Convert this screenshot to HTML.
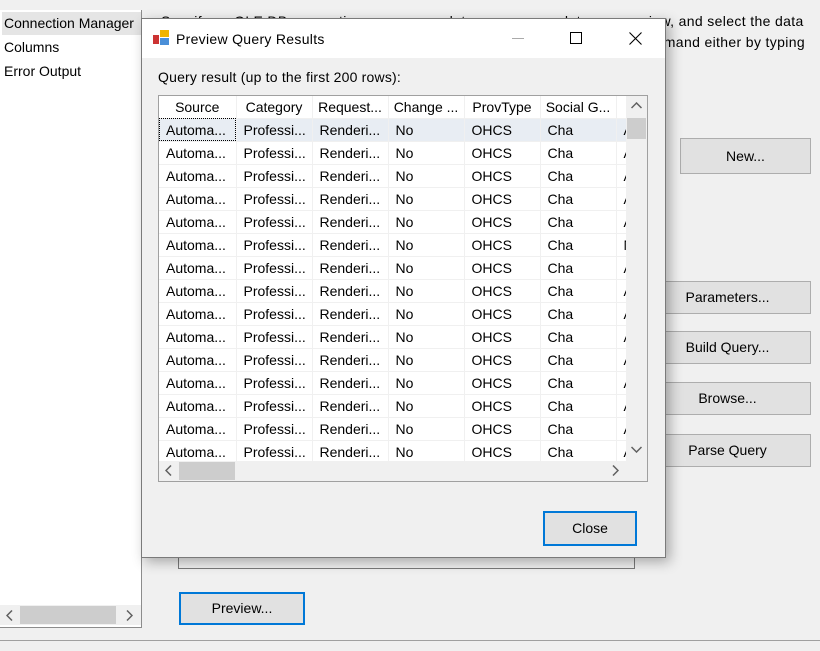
<!DOCTYPE html>
<html><head><style>
*{box-sizing:border-box;margin:0;padding:0}
body{width:820px;height:651px;background:#f0f0f0;font-family:"Liberation Sans",sans-serif;font-size:14px;color:#000;position:relative;overflow:hidden}
.a{position:absolute}
.btn{position:absolute;background:#e1e1e1;border:1px solid #adadad;text-align:center;font-size:14px}
.bb{border:2px solid #0078d7}
table{border-collapse:collapse;table-layout:fixed}
td,th{height:23px;border-right:1px solid #f0f0f0;border-bottom:1px solid #f0f0f0;font-weight:normal;white-space:nowrap;overflow:hidden;padding:0 0 0 7px;text-align:left;font-size:14px}
th{text-align:center;padding:0;height:22px}
</style></head><body>
<div class="a" style="left:0;top:10px;width:142px;height:618px;background:#fff;border-right:1px solid #8c8c8c;border-bottom:1px solid #8c8c8c"></div>
<div class="a" style="left:2px;top:12px;width:139px;height:23px;background:#e5e5e5"></div>
<div class="a" style="left:4px;top:15px">Connection Manager</div>
<div class="a" style="left:4px;top:39px">Columns</div>
<div class="a" style="left:4px;top:63px">Error Output</div>
<div class="a" style="left:0;top:605px;width:141px;height:20px;background:#f0f0f0"></div>
<div class="a" style="left:20px;top:606px;width:96px;height:18px;background:#cdcdcd"></div>
<svg class="a" style="left:6px;top:610px" width="7" height="11"><path d="M6 0.5L1 5.5L6 10.5" stroke="#606060" fill="none" stroke-width="1.5"/></svg>
<svg class="a" style="left:126px;top:610px" width="7" height="11"><path d="M1 0.5L6 5.5L1 10.5" stroke="#606060" fill="none" stroke-width="1.5"/></svg>
<div class="a" style="left:0;top:640px;width:820px;height:1px;background:#a0a0a0"></div>
<div class="a" style="left:161px;top:11px;width:660px;line-height:21px;letter-spacing:0.35px;white-space:nowrap">Specify an OLE DB connection manager, a data source, or a data source view, and select the data<br>access mode. If using the SQL command access mode, specify the SQL command either by typing</div>
<div class="btn" style="left:680px;top:138px;width:131px;height:36px;line-height:34px">New...</div>
<div class="a" style="left:640px;top:208px;width:26px;height:30px;border:1px solid #7a7a7a;background:#f0f0f0"></div>
<div class="btn" style="left:640px;top:281px;width:171px;height:33px;line-height:31px;padding-left:4px">Parameters...</div>
<div class="btn" style="left:640px;top:331px;width:171px;height:33px;line-height:31px;padding-left:4px">Build Query...</div>
<div class="btn" style="left:640px;top:382px;width:171px;height:33px;line-height:31px;padding-left:4px">Browse...</div>
<div class="btn" style="left:640px;top:434px;width:171px;height:33px;line-height:31px;padding-left:4px">Parse Query</div>
<div class="a" style="left:178px;top:545px;width:457px;height:24px;border:1px solid #7a7a7a;background:#f0f0f0"></div>
<div class="btn bb" style="left:179px;top:592px;width:126px;height:33px;line-height:29px">Preview...</div>
<div class="a" style="left:141px;top:18px;width:525px;height:540px;border:1px solid #7a7a7a;background:#f0f0f0;box-shadow:4px 4px 12px rgba(0,0,0,.3)">
 <div class="a" style="left:0;top:0;width:523px;height:39px;background:#fff"></div>
 <svg class="a" style="left:11px;top:10px" width="18" height="18" viewBox="0 0 18 18"><rect x="0" y="6" width="6" height="9" fill="#c33"/><rect x="7" y="1" width="9" height="7" fill="#f0b400"/><rect x="7" y="9" width="9" height="7" fill="#4a8fd8"/></svg>
 <div class="a" style="left:34px;top:12px;letter-spacing:0.3px">Preview Query Results</div>
 <div class="a" style="left:370px;top:19px;width:12px;height:1px;background:#aaa"></div>
 <div class="a" style="left:428px;top:13px;width:12px;height:12px;border:1px solid #000"></div>
 <svg class="a" style="left:487px;top:13px" width="13" height="13"><path d="M0.5 0.5L12.5 12.5M12.5 0.5L0.5 12.5" stroke="#000" stroke-width="1.1"/></svg>
 <div class="a" style="left:16px;top:50px;letter-spacing:0.2px">Query result (up to the first 200 rows):</div>
 <div class="a" style="left:16px;top:76px;width:490px;height:387px;border:1px solid #a0a0a0;background:#fff;overflow:hidden">
  <div class="a" style="left:0;top:0;width:467px;height:365px;overflow:hidden">
  <table style="width:535px">
   <colgroup><col style="width:77px"><col style="width:76px"><col style="width:76px"><col style="width:76px"><col style="width:76px"><col style="width:76px"><col style="width:78px"></colgroup>
   <tr><th>Source</th><th>Category</th><th>Request...</th><th>Change ...</th><th>ProvType</th><th>Social G...</th><th>S</th></tr>
   <tr style="background:#e8edf3"><td style="outline:1px dotted #000;outline-offset:-1px">Automa...</td><td>Professi...</td><td>Renderi...</td><td>No</td><td>OHCS</td><td>Cha</td><td>A</td></tr>
   <tr><td>Automa...</td><td>Professi...</td><td>Renderi...</td><td>No</td><td>OHCS</td><td>Cha</td><td>A</td></tr>
   <tr><td>Automa...</td><td>Professi...</td><td>Renderi...</td><td>No</td><td>OHCS</td><td>Cha</td><td>A</td></tr>
   <tr><td>Automa...</td><td>Professi...</td><td>Renderi...</td><td>No</td><td>OHCS</td><td>Cha</td><td>A</td></tr>
   <tr><td>Automa...</td><td>Professi...</td><td>Renderi...</td><td>No</td><td>OHCS</td><td>Cha</td><td>A</td></tr>
   <tr><td>Automa...</td><td>Professi...</td><td>Renderi...</td><td>No</td><td>OHCS</td><td>Cha</td><td>M</td></tr>
   <tr><td>Automa...</td><td>Professi...</td><td>Renderi...</td><td>No</td><td>OHCS</td><td>Cha</td><td>A</td></tr>
   <tr><td>Automa...</td><td>Professi...</td><td>Renderi...</td><td>No</td><td>OHCS</td><td>Cha</td><td>A</td></tr>
   <tr><td>Automa...</td><td>Professi...</td><td>Renderi...</td><td>No</td><td>OHCS</td><td>Cha</td><td>A</td></tr>
   <tr><td>Automa...</td><td>Professi...</td><td>Renderi...</td><td>No</td><td>OHCS</td><td>Cha</td><td>A</td></tr>
   <tr><td>Automa...</td><td>Professi...</td><td>Renderi...</td><td>No</td><td>OHCS</td><td>Cha</td><td>A</td></tr>
   <tr><td>Automa...</td><td>Professi...</td><td>Renderi...</td><td>No</td><td>OHCS</td><td>Cha</td><td>A</td></tr>
   <tr><td>Automa...</td><td>Professi...</td><td>Renderi...</td><td>No</td><td>OHCS</td><td>Cha</td><td>A</td></tr>
   <tr><td>Automa...</td><td>Professi...</td><td>Renderi...</td><td>No</td><td>OHCS</td><td>Cha</td><td>A</td></tr>
   <tr><td>Automa...</td><td>Professi...</td><td>Renderi...</td><td>No</td><td>OHCS</td><td>Cha</td><td>A</td></tr>
  </table>
  </div>
  <div class="a" style="left:467px;top:0;width:21px;height:365px;background:#f0f0f0"></div>
  <div class="a" style="left:468px;top:22px;width:19px;height:21px;background:#cdcdcd"></div>
  <svg class="a" style="left:472px;top:6px" width="11" height="7"><path d="M0.5 6L5.5 1L10.5 6" stroke="#606060" fill="none" stroke-width="1.5"/></svg>
  <svg class="a" style="left:472px;top:350px" width="11" height="7"><path d="M0.5 1L5.5 6L10.5 1" stroke="#606060" fill="none" stroke-width="1.5"/></svg>
  <div class="a" style="left:0;top:365px;width:488px;height:20px;background:#f0f0f0"></div>
  <div class="a" style="left:20px;top:366px;width:56px;height:18px;background:#cdcdcd"></div>
  <svg class="a" style="left:6px;top:369px" width="7" height="11"><path d="M6 0.5L1 5.5L6 10.5" stroke="#606060" fill="none" stroke-width="1.5"/></svg>
  <svg class="a" style="left:453px;top:369px" width="7" height="11"><path d="M1 0.5L6 5.5L1 10.5" stroke="#606060" fill="none" stroke-width="1.5"/></svg>
 </div>
 <div class="btn bb" style="left:401px;top:492px;width:94px;height:35px;line-height:31px">Close</div>
</div>
</body></html>
